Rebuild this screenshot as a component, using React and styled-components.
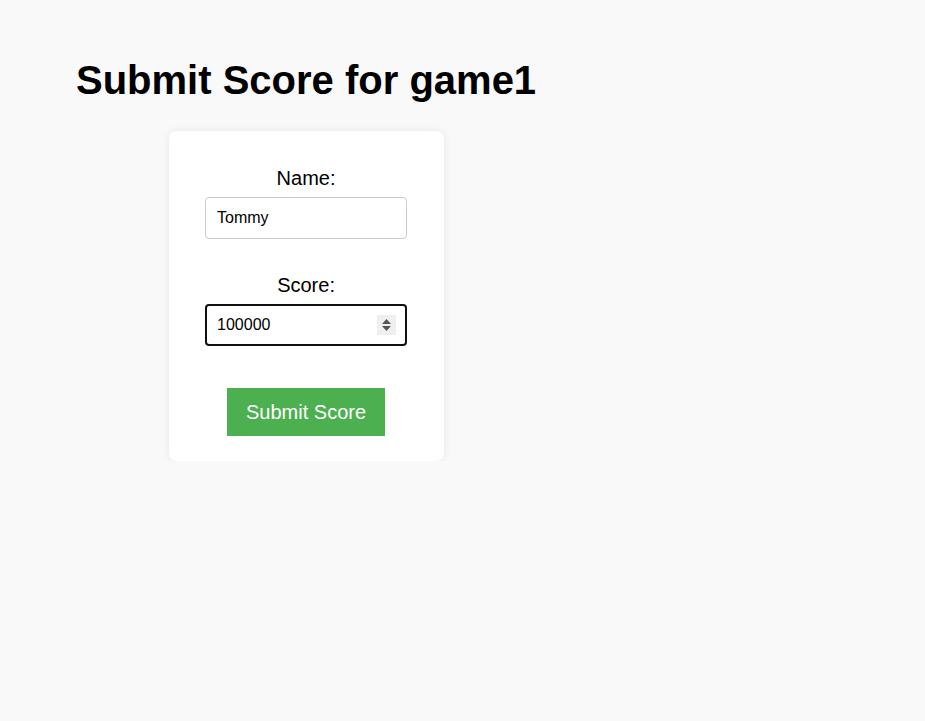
import React from "react";
import styled, { createGlobalStyle } from "styled-components";

const Global = createGlobalStyle`
  html, body {
    margin: 0;
    padding: 0;
    background: #f9f9f9;
    font-family: "Liberation Sans", Arial, sans-serif;
    color: #000;
  }
`;

const Page = styled.div`
  display: inline-flex;
  flex-direction: column;
  align-items: center;
  padding: 57px 0 0 76px;
`;

const Title = styled.h1`
  margin: 0;
  font-size: 40px;
  line-height: 46px;
  font-weight: 700;
`;

const Card = styled.form`
  margin-top: 28px;
  width: 275px;
  box-sizing: border-box;
  padding: 36px 0 25px;
  background: #fff;
  border-radius: 8px;
  box-shadow: 0 0 10px rgba(0, 0, 0, 0.08);
  display: flex;
  flex-direction: column;
  align-items: center;
`;

const Field = styled.div`
  display: flex;
  flex-direction: column;
  align-items: center;
  margin-top: ${(p) => (p.$first ? 0 : 35)}px;
`;

const Label = styled.label`
  font-size: 20px;
  line-height: 23px;
  margin-bottom: 7px;
`;

const InputWrap = styled.div`
  position: relative;
  width: 202px;
  height: 42px;
`;

const Input = styled.input`
  box-sizing: border-box;
  width: 100%;
  height: 100%;
  margin: 0;
  font-family: "Liberation Sans", Arial, sans-serif;
  font-size: 16px;
  color: #000;
  background: #fff;
  border: ${(p) => (p.$focused ? "2px solid #101010" : "1px solid #ccc")};
  border-radius: 4px;
  padding: 0 ${(p) => (p.$focused ? 10 : 11)}px;
  outline: none;
`;

const Spinner = styled.div`
  position: absolute;
  top: 11px;
  right: 11px;
  width: 19px;
  height: 20px;
  background: #efefef;
  display: flex;
  align-items: center;
  justify-content: center;
`;

const Button = styled.button`
  margin-top: 42px;
  height: 48px;
  padding: 0 19px;
  border: none;
  border-radius: 0;
  background: #4caf50;
  color: #fff;
  font-family: "Liberation Sans", Arial, sans-serif;
  font-size: 20px;
  cursor: pointer;
`;

export default function App() {
  return (
    <>
      <Global />
      <Page>
        <Title>Submit Score for game1</Title>
        <Card onSubmit={(e) => e.preventDefault()}>
          <Field $first>
            <Label htmlFor="name">Name:</Label>
            <InputWrap>
              <Input id="name" type="text" defaultValue="Tommy" />
            </InputWrap>
          </Field>
          <Field>
            <Label htmlFor="score">Score:</Label>
            <InputWrap>
              <Input id="score" type="text" defaultValue="100000" $focused />
              <Spinner>
                <svg width="11" height="14" viewBox="0 0 11 14">
                  <path d="M5.5 1 L10 6 H1 Z" fill="#555" />
                  <path d="M1 8 H10 L5.5 13 Z" fill="#555" />
                </svg>
              </Spinner>
            </InputWrap>
          </Field>
          <Button type="submit">Submit Score</Button>
        </Card>
      </Page>
    </>
  );
}
